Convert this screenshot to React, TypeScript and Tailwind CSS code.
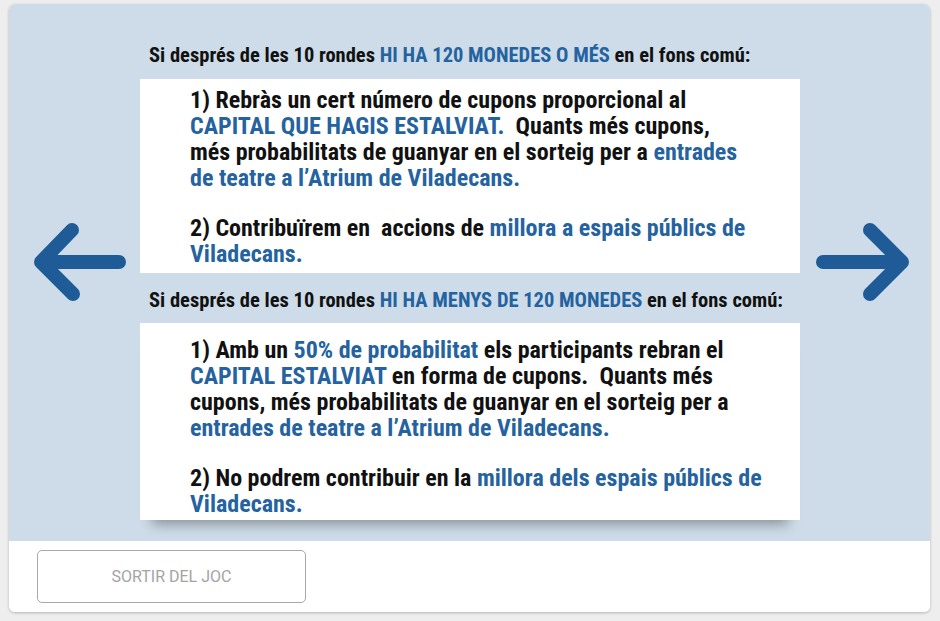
import React from "react";

const B = ({ children }: { children: React.ReactNode }) => (
  <span className="text-[#2462a0]">{children}</span>
);

const Line = ({ children }: { children: React.ReactNode }) => (
  <div className="whitespace-pre leading-[26px] h-[26px]">{children}</div>
);

export default function App() {
  return (
    <div className="w-[940px] h-[621px] bg-[#eeeeee] pt-[4px] pl-[9px] font-['Roboto',sans-serif]">
      <div className="w-[921px] h-[608px] rounded-[6px] overflow-hidden bg-white shadow-[0_1px_3px_rgba(0,0,0,0.25)] flex flex-col">
        <div className="h-[537px] bg-[#cddce8] flex">
          <div className="w-[131px] shrink-0">
            <svg className="mt-[218px]" width="131" height="80" viewBox="0 0 131 80">
              <path d="M110 40 H32 M63 8 L32 40 L64 72" fill="none" stroke="#1f5c97" strokeWidth="14" strokeLinecap="round" strokeLinejoin="round" />
            </svg>
          </div>
          <div className="w-[660px] shrink-0 pt-[41px] font-bold text-[#111111] [font-stretch:condensed]">
            <div className="text-[20.5px] leading-[20px] h-[20px] mb-[14px] pl-[9px] whitespace-pre">
              Si després de les 10 rondes <B>HI HA 120 MONEDES O MÉS</B> en el fons comú:
            </div>
            <div className="bg-white h-[194px] pl-[50px] pt-[8px] text-[24px]">
              <Line>1) Rebràs un cert número de cupons proporcional al</Line>
              <Line><B>CAPITAL QUE HAGIS ESTALVIAT.</B>  Quants més cupons,</Line>
              <Line>més probabilitats de guanyar en el sorteig per a <B>entrades</B></Line>
              <Line><B>de teatre a l’Atrium de Viladecans.</B></Line>
              <div className="h-[24px]" />
              <Line>2) Contribuïrem en  accions de <B>millora a espais públics de</B></Line>
              <Line><B>Viladecans.</B></Line>
            </div>
            <div className="text-[20.5px] leading-[20px] h-[50px] pt-[17px] pl-[9px] whitespace-pre">
              Si després de les 10 rondes <B>HI HA MENYS DE 120 MONEDES</B> en el fons comú:
            </div>
            <div className="bg-white h-[197px] pl-[50px] pt-[14px] text-[24px] shadow-[0_16px_12px_-12px_rgba(0,0,0,0.35)]">
              <Line>1) Amb un <B>50% de probabilitat</B> els participants rebran el</Line>
              <Line><B>CAPITAL ESTALVIAT</B> en forma de cupons.  Quants més</Line>
              <Line>cupons, més probabilitats de guanyar en el sorteig per a</Line>
              <Line><B>entrades de teatre a l’Atrium de Viladecans.</B></Line>
              <div className="h-[24px]" />
              <Line>2) No podrem contribuir en la <B>millora dels espais públics de</B></Line>
              <Line><B>Viladecans.</B></Line>
            </div>
          </div>
          <div className="w-[130px] shrink-0">
            <svg className="mt-[218px]" width="130" height="80" viewBox="0 0 130 80">
              <path d="M23 40 H102 M70 8 L102 40 L70 72" fill="none" stroke="#1f5c97" strokeWidth="14" strokeLinecap="round" strokeLinejoin="round" />
            </svg>
          </div>
        </div>
        <div className="flex-1 bg-white pl-[28px] pt-[9px]">
          <button className="w-[269px] h-[53px] rounded-[5px] border border-[#a8a8a8] bg-white text-[16px] text-[#a4a4a4] font-['Roboto',sans-serif]">
            SORTIR DEL JOC
          </button>
        </div>
      </div>
    </div>
  );
}
